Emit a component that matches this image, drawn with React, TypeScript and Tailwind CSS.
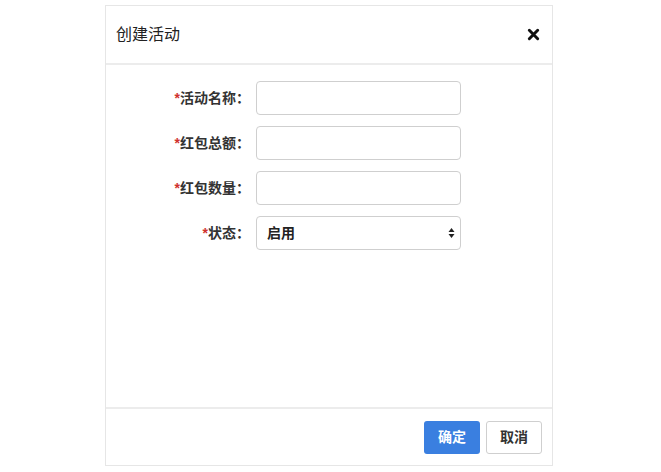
import { useState } from 'react';

const fields = ['活动名称', '红包总额', '红包数量'];

export default function App() {
  const [status, setStatus] = useState('启用');

  return (
    <div
      className="min-h-screen bg-white pt-[5px] pl-[105px]"
      style={{ fontFamily: '"Helvetica Neue", "Liberation Sans", "Noto Sans CJK SC", sans-serif' }}
    >
      <div className="flex h-[461px] w-[448px] flex-col border border-[#e6e6e6] bg-white">
        <div className="flex h-[59px] items-center justify-between border-b-2 border-[#ececec] pl-[10px] pr-[12px]">
          <h3 className="text-[16px] text-[#222]">创建活动</h3>
          <button className="text-[#111]">
            <svg width="13" height="13" viewBox="0 0 14 14">
              <path d="M2.5 2.5 L11.5 11.5 M11.5 2.5 L2.5 11.5" stroke="currentColor" strokeWidth="3.2" strokeLinecap="round" />
            </svg>
          </button>
        </div>

        <div className="flex flex-1 flex-col gap-[11px] pt-[16px]">
          {fields.map((f) => (
            <div key={f} className="flex items-center">
              <label className="w-[144px] text-right text-[14px] font-bold text-[#333]">
                <span className="text-[#d0312d]">*</span>
                {f}：
              </label>
              <input className="ml-[6px] h-[34px] w-[205px] rounded-[4px] border border-[#cfcfcf] px-2 text-[13px] outline-none" />
            </div>
          ))}
          <div className="flex items-center">
            <label className="w-[144px] text-right text-[14px] font-bold text-[#333]">
              <span className="text-[#d0312d]">*</span>
              状态：
            </label>
            <div className="relative ml-[6px] h-[34px] w-[205px]">
              <select
                value={status}
                onChange={(e) => setStatus(e.target.value)}
                className="h-full w-full appearance-none rounded-[4px] border border-[#cfcfcf] bg-white pl-[10px] text-[14px] font-bold text-[#222] outline-none"
              >
                <option>启用</option>
                <option>停用</option>
              </select>
              <svg className="pointer-events-none absolute right-[6px] top-[11px]" width="7" height="12" viewBox="0 0 7 12">
                <path d="M3.5 1 L6.5 5 L0.5 5 Z M3.5 11 L6.5 7 L0.5 7 Z" fill="#222" />
              </svg>
            </div>
          </div>
        </div>

        <div className="flex h-[58px] items-start justify-end gap-[6px] border-t-2 border-[#ececec] pr-[10px] pt-[12px]">
          <button className="h-[33px] w-[56px] rounded-[3px] bg-[#3a7fe0] text-[14px] font-bold text-white">确定</button>
          <button className="h-[33px] w-[56px] rounded-[3px] border border-[#cfcfcf] bg-white text-[14px] font-bold text-[#333]">取消</button>
        </div>
      </div>
    </div>
  );
}
